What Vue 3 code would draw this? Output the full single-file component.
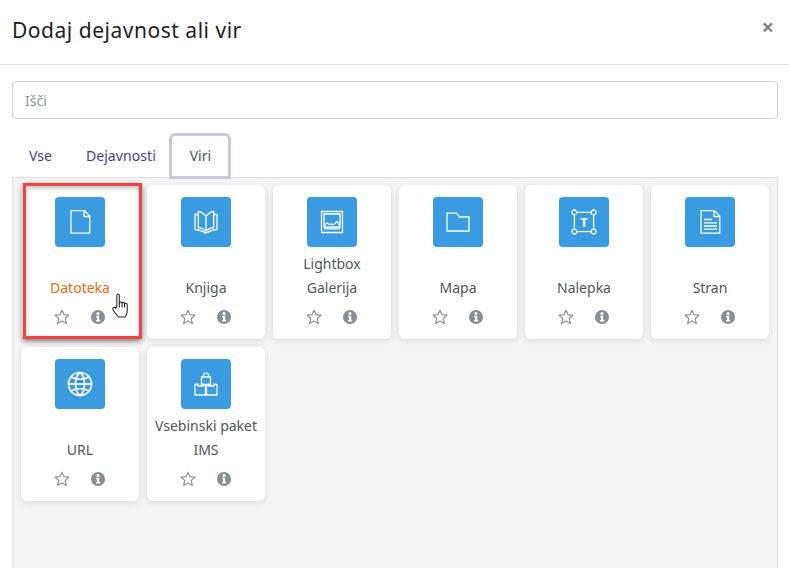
<script setup>
const tabs = [
  { label: 'Vse', cls: 'tab-vse' },
  { label: 'Dejavnosti', cls: 'tab-dej' },
  { label: 'Viri', cls: 'tab-viri active' }
]
const cards = [
  { id: 'file', lines: ['Datoteka'], hot: true, paths: ['M3 .7H16.5L21.8 6V23.2H3Z', 'M16 .7V6.5H21.8'] },
  { id: 'book', lines: ['Knjiga'], paths: ['M12 6C9.5 3.5 6.5 1.5 4.3 1.5V17.5C7 17.8 10 19 12 21C14 19 17 17.8 19.7 17.5V1.5C17.5 1.5 14.5 3.5 12 6V21', 'M4.3 4.5H1V19.5C5 20 9 21 12 23.3C15 21 19 20 23 19.5V4.5H19.7'] },
  { id: 'light', lines: ['Lightbox', 'Galerija'], paths: ['M1.5 1.5H22.5V22.5H1.5Z', 'M4 4H20V17H4Z', 'M4.5 15.5C6 13.5 7 12.5 8 13.5S10 15 11.5 13.5C13 15 14 15 15 13.5S17.5 11 18 12.5 19 15 20 15', 'M4 18.8H20'] },
  { id: 'folder', lines: ['Mapa'], paths: ['M1 3.2H10.5L13.5 7H23V21H1Z'] },
  { id: 'label', lines: ['Nalepka'], paths: ['M4.8 2.4H19.2M4.8 21.6H19.2M2.4 4.8V19.2M21.6 4.8V19.2', 'M4.8 2.4A2.4 2.4 0 1 1 0 2.4A2.4 2.4 0 1 1 4.8 2.4M24 2.4A2.4 2.4 0 1 1 19.2 2.4A2.4 2.4 0 1 1 24 2.4M4.8 21.6A2.4 2.4 0 1 1 0 21.6A2.4 2.4 0 1 1 4.8 21.6M24 21.6A2.4 2.4 0 1 1 19.2 21.6A2.4 2.4 0 1 1 24 21.6'], letter: true },
  { id: 'page', lines: ['Stran'], paths: ['M3 .7H16.5L21.8 6V23.2H3Z', 'M16 .7V6.5H21.8', 'M6 9.5H14M6 12.8H19M6 16H19M6 19.2H19'] },
  { id: 'url', lines: ['URL'], heavy: true, paths: ['M12 .5A11.5 11.5 0 1 0 12 23.5A11.5 11.5 0 1 0 12 .5Z', 'M12 .5C6 5 6 19 12 23.5C18 19 18 5 12 .5Z', 'M3 5C8 8 16 8 21 5M3 19C8 16 16 16 21 19', 'M.5 12H23.5'] },
  { id: 'ims', lines: ['Vsebinski paket', 'IMS'], paths: ['M7.5 5H16.5V13H7.5Z', 'M9.5 5V3C9.5 .4 14.5 .4 14.5 3V5', 'M1 12.5L4 12V14H9V12L11.5 12.5V23H1Z', 'M12.5 12.5L15 12V14H20V12L23 12.5V23H12.5Z'] }
]
</script>

<template>
  <div class="modal">
    <header class="head">
      <h1 class="title">Dodaj dejavnost ali vir</h1>
      <span class="close">×</span>
    </header>
    <div class="search-wrap">
      <input class="search" type="text" placeholder="Išči" />
    </div>
    <nav class="tabs">
      <a v-for="t in tabs" :key="t.label" class="tab" :class="t.cls">{{ t.label }}</a>
    </nav>
    <main class="panel">
      <div class="grid">
        <article v-for="c in cards" :key="c.id" class="card" :class="{ hot: c.hot }">
          <div class="tile">
            <svg class="glyph" :class="{ heavy: c.heavy }" viewBox="0 0 24 24" fill="none" stroke="#fff">
              <path v-for="(d, i) in c.paths" :key="i" :d="d" />
              <text v-if="c.letter" x="12" y="16.5" text-anchor="middle" class="t">T</text>
            </svg>
          </div>
          <div class="name">
            <span v-for="l in c.lines" :key="l" class="line">{{ l }}</span>
          </div>
          <div class="actions">
            <svg class="star" viewBox="0 0 16 16" fill="none" stroke="#8f959e" stroke-width="1.2" stroke-linejoin="round">
              <path d="M8 1.2L10 5.7L14.9 6.2L11.2 9.5L12.3 14.4L8 11.9L3.7 14.4L4.8 9.5L1.1 6.2L6 5.7Z" />
            </svg>
            <svg class="info" viewBox="0 0 14 14">
              <circle cx="7" cy="7" r="7" fill="#868e96" />
              <circle cx="7" cy="3.4" r="1.5" fill="#fff" />
              <path d="M5 5.8H8.2V10H9.2V11.4H5V10H6V7.2H5Z" fill="#fff" />
            </svg>
          </div>
          <template v-if="c.hot">
            <span class="mark"></span>
            <svg class="hand" viewBox="0 0 18 24" fill="#fff" stroke="#222" stroke-width="1" stroke-linejoin="round">
              <path d="M5 13.5V2.4C5 .6 7.4 .6 7.4 2.4V9.5C7.6 8.2 10 8.2 10 9.8C10.2 8.6 12.4 8.8 12.4 10.4C12.8 9.4 15 9.6 15 11.4V17C15 20 14 21.5 13 23H6.5C5 21 3.5 19.5 1.5 16.5C.2 14.5 2.5 13 4 14.5Z" />
              <path d="M7.4 9.5V14M10 9.8V14M12.4 10.4V14" />
            </svg>
          </template>
        </article>
      </div>
    </main>
  </div>
</template>

<style>
html, body { margin: 0; background: #fff; }
</style>

<style scoped>
.modal {
  height: 568px;
  width: 789px;
  overflow: hidden;
  display: flex;
  flex-direction: column;
  background: #fff;
  font-family: "Noto Sans", "Open Sans", sans-serif;
  color: #50565c;
}
.head {
  height: 65px;
  box-sizing: border-box;
  border-bottom: 1px solid #dee2e6;
  display: flex;
  align-items: center;
  justify-content: space-between;
  padding: 0 15px 5px 12px;
  flex: none;
}
.title {
  margin: 0;
  font-size: 21px;
  font-weight: 400;
  color: #1d2125;
  letter-spacing: 0.52px;
}
.close {
  font-size: 22px;
  font-weight: 700;
  color: #868686;
  line-height: 1;
  margin-top: -7px;
}
.search-wrap { padding: 16px 11px 0 12px; flex: none; }
.search {
  display: block;
  width: 100%;
  height: 38px;
  box-sizing: border-box;
  border: 1px solid #ced4da;
  border-radius: 4px;
  padding: 0 12px;
  font: 14px "Noto Sans", sans-serif;
  outline: none;
}
.search::placeholder { color: #8f959e; opacity: 1; }
.tabs {
  position: relative;
  height: 44px;
  margin-top: 14px;
  display: flex;
  padding-left: 29px;
  flex: none;
  font-size: 14px;
  z-index: 1;
}
.tab { color: #443f8e; line-height: 46px; }
.tab-dej { margin-left: 34px; letter-spacing: 0.08px; }
.tab-viri {
  margin-left: 13.5px;
  width: 62px;
  height: 46px;
  box-sizing: border-box;
  border: 3px solid #cbc8dd;
  border-radius: 6px 6px 0 0;
  text-align: center;
  line-height: 40px;
  color: #50565c;
  background: #fff;
}
.panel {
  flex: none;
  height: 400px;
  margin: 0 11px 0 12px;
  background: #f4f4f4;
  border: 1px solid #dee2e6;
  padding: 7px 8px 0;
}
.grid {
  display: grid;
  grid-template-columns: repeat(6, 118px);
  grid-auto-rows: 154px;
  gap: 8px;
}
.card {
  position: relative;
  background: #fff;
  border-radius: 6px;
  box-shadow: 0 2px 6px rgba(0, 0, 0, 0.1);
  display: flex;
  flex-direction: column;
  align-items: center;
  padding-top: 12px;
  box-sizing: border-box;
}
.tile {
  width: 50px;
  height: 50px;
  background: #399be2;
  border-radius: 4px;
  display: flex;
  align-items: center;
  justify-content: center;
  flex: none;
}
.glyph { width: 24px; height: 24px; overflow: visible; stroke-width: 1.3; }
.glyph.heavy { stroke-width: 1.7; }
.t { font: 700 13px "Noto Sans", sans-serif; fill: #fff; stroke: none; }
.name {
  height: 48px;
  margin-top: 5px;
  display: flex;
  flex-direction: column;
  justify-content: flex-end;
  align-items: center;
  font-size: 14px;
  line-height: 24px;
  white-space: nowrap;
  flex: none;
}
.line { display: block; }
.hot .name { color: #ec6a10; }
.actions {
  margin-top: 9px;
  width: 52px;
  box-sizing: border-box;
  padding-right: 1px;
  display: flex;
  justify-content: space-between;
  align-items: center;
}
.star { width: 16px; height: 16px; }
.info { width: 14px; height: 14px; }
.mark {
  position: absolute;
  left: 2px;
  top: -2px;
  width: 119px;
  height: 156px;
  box-sizing: border-box;
  border: 3px solid #ef4444;
  box-shadow: 0 2px 5px rgba(0, 0, 0, 0.45), inset 0 2px 5px rgba(0, 0, 0, 0.25);
}
.hand {
  position: absolute;
  left: 90px;
  top: 108px;
  width: 20px;
  height: 25px;
}
</style>
